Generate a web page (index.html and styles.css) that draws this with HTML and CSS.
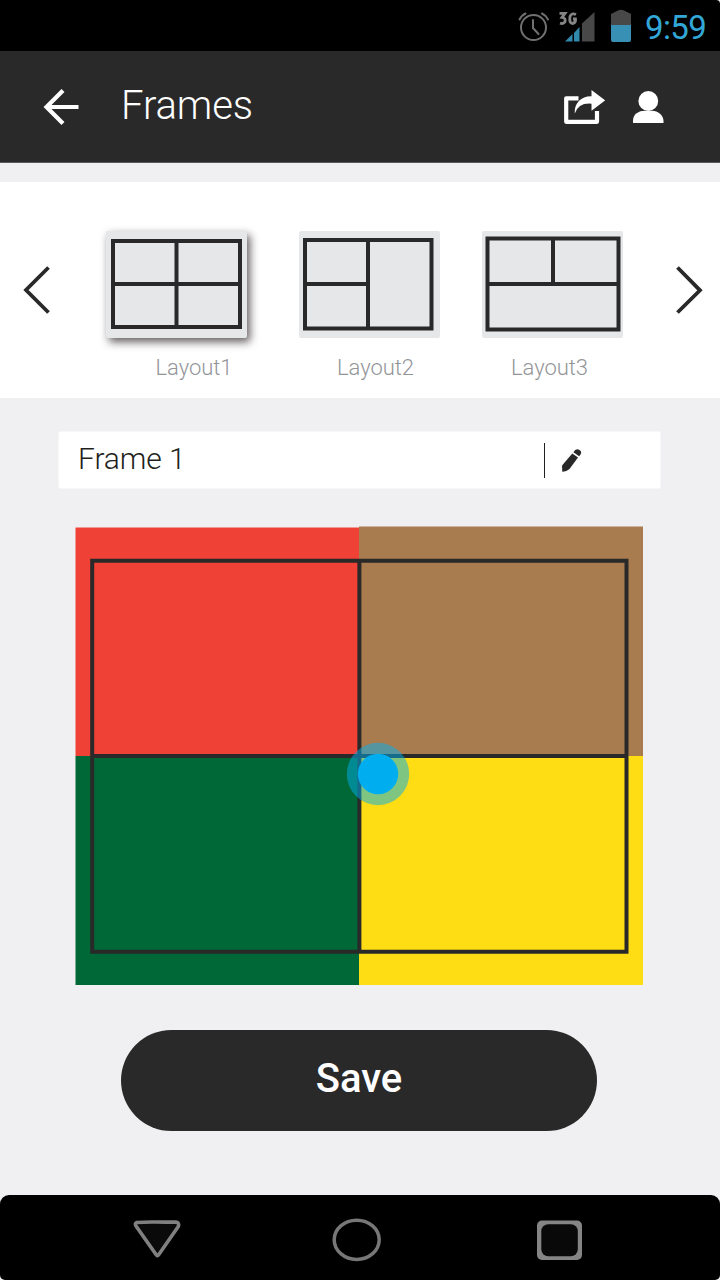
FILE: index.html
```html
<!DOCTYPE html>
<html lang="en">
<head>
<meta charset="utf-8">
<title>Frames</title>
<link rel="stylesheet" href="styles.css">
</head>
<body>
<div class="screen">
  <div class="status">
    <svg class="status-icons" width="118" height="51" viewBox="518 0 118 51">
      <g fill="none" stroke="#707070" stroke-width="2" stroke-linecap="round">
        <circle cx="533.5" cy="27.5" r="12.5"/>
        <path d="M533 20v8l5.500 6M519.500 19.500q2.500-4.500 6-6M548 19.500q-2.500-4.500-6-6"/>
      </g>
      <g fill="none" stroke="#858585" stroke-width="2.800">
        <path d="M559.500 13.300h5.500l-3 4q4 .5 3 4.500-1.500 2.500-5 1.300M576 14.500q-4.500-2-6 2-1 7 2.500 7 3.500-.5 3-4.500h-2.500"/>
      </g>
      <path d="M582 23.500L594.500 12V41.500H582z" fill="#484848"/>
      <path d="M565 41.500l7.500-7.500v7.500zM574 33l5.500-6v14.500H574z" fill="#3189ac"/>
      <path d="M611 14l7-3.500q3-1.500 6 0l7 3.500v12h-20z" fill="#484848"/>
      <path d="M611 25h20v15q0 2-2 2h-16q-2 0-2-2z" fill="#3990b5"/>
    </svg>
    <span class="time">9:59</span>
  </div>

  <header class="header">
    <svg class="back" width="36" height="38" viewBox="43 88 36 38" fill="none" stroke="#fff" stroke-width="4.200">
      <path d="M63 90.500L46.500 107 63 123.500M46.500 107H78.500"/>
    </svg>
    <h1 class="title">Frames</h1>
    <svg class="share" width="42" height="36" viewBox="563 89 42 36">
      <path d="M578.500 98.300H566.200V121.800H597V111" fill="none" stroke="#fff" stroke-width="4.200" stroke-linejoin="round"/>
      <path d="M591.500 90L605.200 100.300 591.500 110.800V103.700Q578.500 102.500 574.800 113.500C574 104 580.500 96 591.500 96.300z" fill="#fff"/>
    </svg>
    <svg class="user" width="32" height="34" viewBox="633 90 32 34" fill="#fff">
      <circle cx="648.300" cy="101" r="9.900"/>
      <path d="M633 123V120.500C633 114 639 110.700 644.500 110.700H652C658 110.700 663.500 115 663.500 121V123z"/>
    </svg>
  </header>

  <section class="layouts">
    <svg class="prev" width="30" height="50" viewBox="22 265 30 50" fill="none" stroke="#292929" stroke-width="3.800">
      <path d="M48.500 267.500L26 290 48.500 312.500"/>
    </svg>
    <div class="choice choice-one">
      <svg class="thumb selected" width="141" height="107" viewBox="0 0 141 107">
        <path d="M7 10H134V96H7zM70.500 10V96M7 53H134" class="lines"/>
      </svg>
      <span class="label">Layout1</span>
    </div>
    <div class="choice choice-two">
      <svg class="thumb" width="141" height="107" viewBox="0 0 141 107">
        <path d="M6 9H132.500V97.500H6zM69 9V97.500M6 53H69" class="lines"/>
      </svg>
      <span class="label">Layout2</span>
    </div>
    <div class="choice choice-three">
      <svg class="thumb" width="141" height="107" viewBox="0 0 141 107">
        <path d="M5.500 7.500H136.500V98.500H5.500zM71 7.500V53M5.500 53H136.500" class="lines"/>
      </svg>
      <span class="label">Layout3</span>
    </div>
    <svg class="next" width="30" height="50" viewBox="674 265 30 50" fill="none" stroke="#292929" stroke-width="3.800">
      <path d="M677.500 267.500L700 290.300 677.500 312.500"/>
    </svg>
  </section>

  <div class="name-field">
    <span class="name">Frame 1</span>
    <span class="divider"></span>
    <svg class="pencil" width="22" height="26" viewBox="561 447 22 26" fill="#292929">
      <path d="M572.300 453.500L578 457.500 569.500 469Q566 472 562.300 471.700L562 465.500z"/>
      <path d="M573.400 452.200Q575.500 448.500 578.500 449.500 582.500 451 580.500 454.500L579.200 456.200z"/>
    </svg>
  </div>

  <svg class="canvas" width="568" height="459" viewBox="75 526 568 459">
    <path d="M75.500 527.500H359V756H75.500z" fill="#ef4136"/>
    <path d="M359 526.500H643V756H359z" fill="#a87c4f"/>
    <path d="M75.500 756H359V985H75.500z" fill="#006837"/>
    <path d="M359 756H643V985H359z" fill="#ffdd15"/>
    <path d="M92.200 560.700H626.500V951.700H92.200zM359.400 560.700V951.700M92.200 756H626.500" class="lines"/>
    <circle cx="378" cy="774" r="31.200" fill="#00aeef" fill-opacity=".5"/>
    <circle cx="378" cy="774" r="20.200" fill="#00aeef"/>
  </svg>

  <button class="save">Save</button>

  <nav class="nav">
    <svg width="50" height="42" viewBox="132 1218 50 42">
      <path d="M136.500 1221.500Q146 1220.800 156 1221T176 1221Q179.500 1221.500 178.300 1225.500L158.500 1254Q157.300 1255.500 156 1253.500L136 1225Q134.500 1222.500 136.500 1221.500z" fill="#0a0a0a" stroke="#808080" stroke-width="3.600"/>
    </svg>
    <svg class="home" width="50" height="44" viewBox="332 1218 50 44">
      <ellipse cx="356.700" cy="1239.800" rx="22.500" ry="19.600" fill="none" stroke="#777" stroke-width="3.500"/>
    </svg>
    <svg width="46" height="42" viewBox="536 1219 46 42">
      <rect x="537" y="1220.500" width="45" height="39.500" rx="5" fill="#858585"/>
      <rect x="541.300" y="1224.300" width="36.500" height="32" rx="7" fill="#090909"/>
    </svg>
  </nav>
</div>
</body>
</html>
```
FILE: styles.css
```css
* {
  box-sizing: border-box;
}

body {
  margin: 0;
  background: #fff;
  font-family: Roboto, "Liberation Sans", sans-serif;
  font-weight: 300;
}

svg {
  display: block;
  flex: none;
}

.screen {
  display: flex;
  flex-direction: column;
  width: 720px;
  height: 1280px;
  background: #f0f0f2;
}

.status {
  display: flex;
  align-items: center;
  height: 51px;
  padding-left: 518px;
  background: #000;
  border-top-right-radius: 4px;
}

.time {
  margin: 4px 0 0 9px;
  color: #33a8d8;
  font-size: 33px;
  font-weight: 400;
  letter-spacing: -.6px;
  line-height: 40px;
}

.header {
  display: flex;
  align-items: flex-start;
  height: 112px;
  padding: 37px 55px 0 43px;
  background: #292929;
  border-bottom: 1px solid #58585a;
}

.title {
  margin: -6px auto 0 42px;
  color: #fff;
  font-size: 40px;
  font-weight: 300;
  letter-spacing: -.1px;
  line-height: 47px;
}

.share {
  margin-top: 1px;
}

.user {
  margin: 2px 0 0 28px;
}

.layouts {
  display: flex;
  align-items: flex-start;
  height: 216px;
  margin-top: 19px;
  padding: 49px 16px 0 22px;
  background: #fff;
}

.prev,
.next {
  margin-top: 34px;
}

.choice {
  display: flex;
  flex-direction: column;
  align-items: center;
  width: 141px;
}

.choice-one {
  margin-left: 54px;
}

.choice-two {
  margin-left: 52px;
}

.choice-three {
  margin: 0 auto 0 42px;
}

.thumb {
  background: #e6e7e9;
  border-radius: 2px;
}

.choice-two .thumb,
.choice-three .thumb {
  margin-left: -1px;
}

.selected {
  box-shadow: 3px 4px 8px rgba(35, 25, 28, .7);
}

.lines {
  fill: none;
  stroke: #292929;
  stroke-width: 4px;
}

.label {
  margin-top: 16px;
  color: #939598;
  font-size: 22px;
  letter-spacing: -.05px;
  line-height: 27px;
}

.choice-one .label {
  padding-left: 35px;
}

.choice-two .label {
  padding-left: 12px;
}

.choice-three .label {
  padding-right: 6px;
}

.name-field {
  display: flex;
  align-items: center;
  width: 603px;
  height: 58px;
  margin: 33px 0 0 58px;
  padding: 0 77px 0 19px;
  background: #fff;
  border: 1px solid #f7f7f8;
  border-radius: 2px;
}

.name {
  margin: -3px auto 0 0;
  color: #231f20;
  font-size: 30px;
  letter-spacing: -.1px;
  line-height: 36px;
}

.divider {
  width: 1px;
  height: 35px;
  background: #231f20;
}

.pencil {
  margin: -1px 0 0 16px;
}

.canvas {
  margin: 37px 0 0 75px;
}

.save {
  width: 476px;
  height: 101px;
  margin: 45px 0 0 121px;
  padding: 0 0 4px;
  border: 0;
  border-radius: 51px;
  background: #292929;
  color: #fff;
  font: 500 40px/48px Roboto, "Liberation Sans", sans-serif;
}

.nav {
  display: flex;
  align-items: center;
  justify-content: space-between;
  height: 85px;
  margin-top: auto;
  padding: 4px 138px 0 132px;
  border-radius: 9px 9px 5px 5px;
  background: #000;
}

.home {
  margin-left: -4px;
}
```
